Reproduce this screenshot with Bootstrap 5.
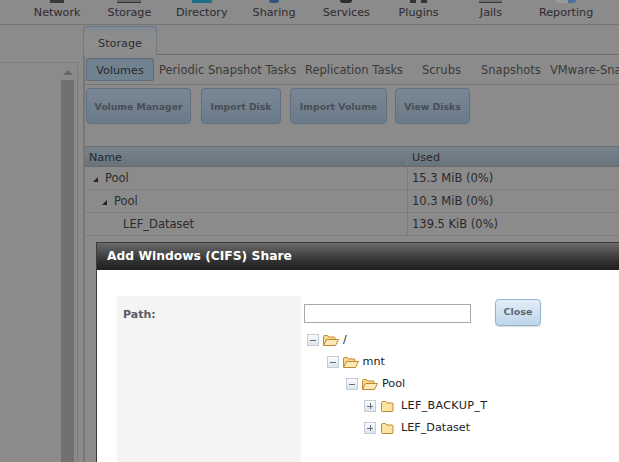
<!DOCTYPE html>
<html lang="en">
<head>
<meta charset="utf-8">
<title>Storage</title>
<link href="https://cdn.jsdelivr.net/npm/bootstrap@5.3.0/dist/css/bootstrap.min.css" rel="stylesheet">
<style>
body{background:#8b8b8b;font-family:"DejaVu Sans",sans-serif;font-size:11.2px;color:#2c2c2c;overflow:hidden;margin:0}
.shell{width:619px;height:462px;position:relative;overflow:hidden}
.topbar{height:25px;border-bottom:1px solid #757575;padding-left:21px}
.topitem{width:72.300px;flex:none;text-align:center;color:#2e2a30;white-space:nowrap;display:flex;flex-direction:column;align-items:center}
.topglyph{height:3px;margin-bottom:2px;flex:none}
.tg-net{width:14px;background:#3a3a3a}
.tg-sto{width:24px;background:#6a6a6a;border-bottom:1px solid #333}
.tg-dir{width:20px;background:#1c6f86}
.tg-sha{width:10px;background:#33557a;border-radius:0 0 6px 6px}
.tg-svc{width:12px;background:#2d2d2d;border-radius:0 0 6px 6px}
.tg-plu{width:17px;background:linear-gradient(90deg,#333 35%,transparent 35% 65%,#333 65%)}
.tg-jai{width:23px;background:#717171;border-bottom:1px solid #333}
.tg-rep{width:20px;background:linear-gradient(90deg,#9a9a9a 60%,#4c6f9c 60%);border-radius:0 0 5px 5px}
.mainrow{height:437px}
.leftpane{width:81px;flex:none;position:relative;padding-top:37px}
.leftbox{height:100%;margin-right:3px;border-top:1px solid #7c7c7c;border-right:1px solid #7c7c7c;display:flex;justify-content:flex-end}
.sbar{width:13px;margin-right:3px;display:flex;flex-direction:column;align-items:center}
.sbar b{margin-top:7px;flex:none;border:5px solid transparent;border-top:0;border-bottom:5px solid #666}
.sbar i{display:block;width:100%;flex:1 1 auto;margin-top:5px;background:#717171}
.rightpane{flex:1 1 auto;min-width:0;margin-left:2px}
.tabstrip{height:30px;padding-top:2px;display:flex;align-items:flex-end;border-bottom:1px solid #6e6e6e}
.tabone{width:74px;height:29px;margin-bottom:-1px;border:1px solid #6f7a84;border-bottom:0;background:linear-gradient(#7f8a94,#8d8d8d 30%);border-radius:3px 3px 0 0;text-align:center;line-height:33px;color:#2e2e2e}
.rightbody{border-left:2px solid #767676;height:407px}
.subtabs{height:30px;padding-left:1px;border-bottom:1px solid #777;white-space:nowrap;font-size:11.5px;color:#3a3a3a;align-items:center}
.subtabs .seltab{width:68px;height:23px;margin-right:5px;border:1px solid #5d6c7b;background:#70818f;border-radius:2px;text-align:center;line-height:23px;color:#26292c;font-size:11.2px;flex:none}
.stab{flex:none;line-height:18px}
.actions{height:61px;padding:3px 0 0 1px}
.actbtn{height:36px;border:1px solid #5f6f7e;border-radius:4px;background:linear-gradient(#7a8895,#6c7b89);font-weight:700;font-size:9.300px;line-height:36px;text-align:center;color:#484e55;flex:none}
.gridtable{border-top:1px solid #6a6a6a}
.gridrow{height:23px;display:flex;border-bottom:1px solid #7f7f7f;line-height:23px;font-size:11.5px}
.gridrow.head{height:20px;line-height:21px;font-size:11.2px;background:linear-gradient(#78848d,#68737c);border-bottom:1px solid #6a6a6a;color:#26292c}
.cname{width:323px;flex:none;border-right:1px solid #7d7d7d;padding-left:4px;white-space:nowrap}
.cused{padding-left:4px;white-space:nowrap;color:#2c2830}
.tri{display:inline-block;width:0;height:0;border-left:5px solid transparent;border-bottom:5px solid #222;margin-right:7px;vertical-align:0}
.dialog{position:absolute;left:96px;top:242px;width:540px;height:230px;background:#fff;border-left:1px solid #3c3c3c;border-top:1px solid #3c3c3c}
.dialoghead{height:27px;background:linear-gradient(#6a6a6a,#2f2f2f 70%,#202020);color:#fff;font-weight:700;font-size:12.3px;line-height:26px;padding-left:10px}
.dialogbody{padding:26px 0 0 20px}
.pathlabel{width:184px;height:200px;flex:none;background:#f4f4f4;font-weight:700;color:#5a5a66;padding:11px 0 0 6px;font-size:11px}
.pathval{flex:1 1 auto;padding-left:3px}
.pathinput{margin-top:8px;width:167px;height:19px;border:1px solid #a9a9a9;background:#fff;flex:none}
.closebtn{margin:3px 0 0 24px;width:46px;height:27px;border:1px solid #96b3cf;border-radius:4px;background:linear-gradient(#e2edf8,#bfd5ea);font-weight:700;font-size:9.5px;line-height:24px;text-align:center;color:#5d6670;box-shadow:0 1px 1px rgba(0,0,0,.15);flex:none}
.treebox{margin-top:3px;padding-left:3px;color:#222;font-size:11.2px}
.treerow{display:flex;align-items:center;height:22px;white-space:nowrap}
.exp{width:12px;height:12px;border:1px solid #c4ccd6;background:linear-gradient(#fafbfd,#dfe5ec);flex:none;margin-right:3px;position:relative}
.exp::before{content:"";position:absolute;left:2px;right:2px;top:4.5px;height:1px;background:#66707c}
.exp.plus::after{content:"";position:absolute;top:2px;bottom:2px;left:4.5px;width:1px;background:#66707c}
.treerow svg{flex:none;margin-right:3px}
.lv1{padding-left:19.500px}
.lv2{padding-left:39px}
.lv3{padding-left:57px}
.lv3 .exp{margin-right:4px}
.lv3 svg{margin-right:2px}
.widecaps{letter-spacing:.3px}
</style>
</head>
<body>
<div class="shell">
  <div class="topbar d-flex">
    <div class="topitem"><i class="topglyph tg-net"></i>Network</div>
    <div class="topitem"><i class="topglyph tg-sto"></i>Storage</div>
    <div class="topitem"><i class="topglyph tg-dir"></i>Directory</div>
    <div class="topitem"><i class="topglyph tg-sha"></i>Sharing</div>
    <div class="topitem"><i class="topglyph tg-svc"></i>Services</div>
    <div class="topitem"><i class="topglyph tg-plu"></i>Plugins</div>
    <div class="topitem"><i class="topglyph tg-jai"></i>Jails</div>
    <div class="topitem" style="width:78px"><i class="topglyph tg-rep"></i>Reporting</div>
  </div>
  <div class="d-flex mainrow">
    <div class="leftpane">
      <div class="leftbox"><div class="sbar"><b></b><i></i></div></div>
    </div>
    <div class="rightpane">
      <div class="tabstrip"><div class="tabone">Storage</div></div>
      <div class="rightbody">
        <div class="subtabs d-flex">
          <span class="seltab">Volumes</span>
          <span class="stab" style="width:146px">Periodic Snapshot Tasks</span>
          <span class="stab" style="width:117px">Replication Tasks</span>
          <span class="stab" style="width:59px">Scrubs</span>
          <span class="stab" style="width:69px">Snapshots</span>
          <span class="stab">VMware-Snapshots</span>
        </div>
        <div class="d-flex actions">
          <div class="actbtn" style="width:105px;margin-right:10px">Volume Manager</div>
          <div class="actbtn" style="width:80px;margin-right:9px">Import Disk</div>
          <div class="actbtn" style="width:97px;margin-right:8px">Import Volume</div>
          <div class="actbtn" style="width:75px">View Disks</div>
        </div>
        <div class="gridtable">
          <div class="gridrow head"><div class="cname">Name</div><div class="cused">Used</div></div>
          <div class="gridrow"><div class="cname" style="padding-left:8px"><i class="tri"></i>Pool</div><div class="cused">15.3 MiB (0%)</div></div>
          <div class="gridrow"><div class="cname" style="padding-left:17px"><i class="tri"></i>Pool</div><div class="cused">10.3 MiB (0%)</div></div>
          <div class="gridrow"><div class="cname" style="padding-left:38px">LEF_Dataset</div><div class="cused">139.5 KiB (0%)</div></div>
        </div>
      </div>
    </div>
  </div>
  <div class="dialog">
    <div class="dialoghead">Add Windows (CIFS) Share</div>
    <div class="d-flex dialogbody">
      <div class="pathlabel">Path:</div>
      <div class="pathval">
        <div class="d-flex">
          <div class="pathinput"></div>
          <div class="closebtn">Close</div>
        </div>
        <div class="treebox">
          <div class="treerow"><i class="exp"></i><svg width="18" height="13" viewBox="0 0 18 13"><path d="M1.500 11V2.500q0-1 1-1h3l1.500 1.500h5q1 0 1 1v1.500" fill="#f6d78e" stroke="#c08a30"/><path d="M1.500 11.500L4.500 5.500H16.500L13.500 11.500Z" fill="#fce9b8" stroke="#c08a30" stroke-linejoin="round"/></svg>/</div>
          <div class="treerow lv1"><i class="exp"></i><svg width="18" height="13" viewBox="0 0 18 13"><path d="M1.500 11V2.500q0-1 1-1h3l1.500 1.500h5q1 0 1 1v1.500" fill="#f6d78e" stroke="#c08a30"/><path d="M1.500 11.500L4.500 5.500H16.500L13.500 11.500Z" fill="#fce9b8" stroke="#c08a30" stroke-linejoin="round"/></svg>mnt</div>
          <div class="treerow lv2"><i class="exp"></i><svg width="18" height="13" viewBox="0 0 18 13"><path d="M1.500 11V2.500q0-1 1-1h3l1.500 1.500h5q1 0 1 1v1.500" fill="#f6d78e" stroke="#c08a30"/><path d="M1.500 11.500L4.500 5.500H16.500L13.500 11.500Z" fill="#fce9b8" stroke="#c08a30" stroke-linejoin="round"/></svg>Pool</div>
          <div class="treerow lv3"><i class="exp plus"></i><svg width="15" height="13" viewBox="0 0 15 13"><path d="M1.500 10.500V2.500q0-1 1-1h3l1.500 1.500h5q1 0 1 1v6.500q0 1-1 1h-9.500q-1 0-1-1z" fill="#fce3a2" stroke="#c08a30"/></svg><span class="ms-1 widecaps">LEF_BACKUP_T</span></div>
          <div class="treerow lv3"><i class="exp plus"></i><svg width="15" height="13" viewBox="0 0 15 13"><path d="M1.500 10.500V2.500q0-1 1-1h3l1.500 1.500h5q1 0 1 1v6.500q0 1-1 1h-9.500q-1 0-1-1z" fill="#fce3a2" stroke="#c08a30"/></svg><span class="ms-1">LEF_Dataset</span></div>
        </div>
      </div>
    </div>
  </div>
</div>
<script src="https://cdn.jsdelivr.net/npm/bootstrap@5.3.0/dist/js/bootstrap.bundle.min.js"></script>
</body>
</html>
